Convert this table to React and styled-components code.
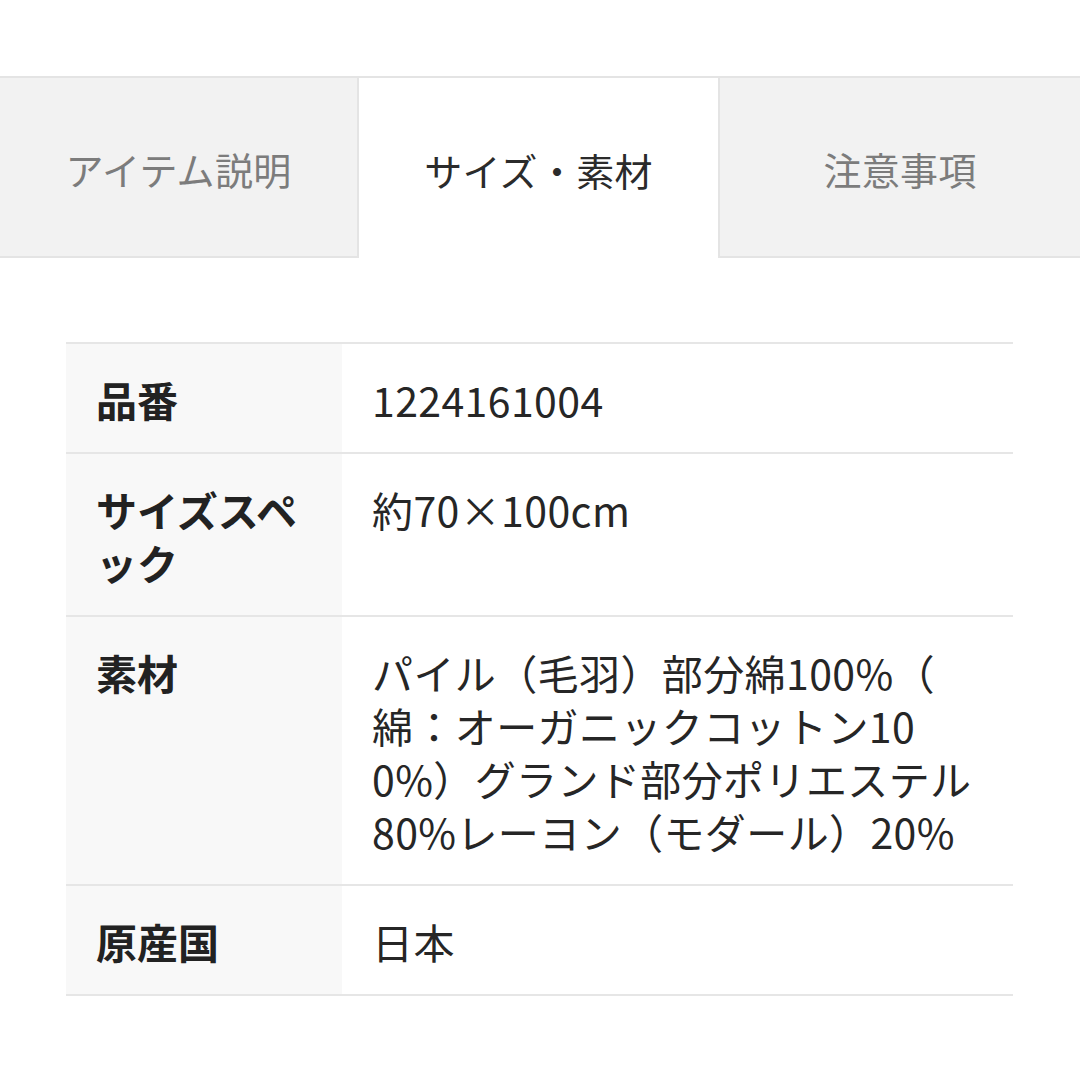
import React from "react";
import styled, { createGlobalStyle } from "styled-components";

const Global = createGlobalStyle`
  html, body { margin: 0; padding: 0; background: #fff; }
  body { font-family: "Noto Sans CJK JP", "Noto Sans", sans-serif; }
`;

const Page = styled.div`
  padding-top: 76px;
  width: 1080px;
`;

const TabBar = styled.div`
  display: grid;
  grid-template-columns: 359px 359px 1fr;
  border-top: 2px solid #e4e4e4;
`;

const Tab = styled.div`
  height: 180px;
  display: flex;
  align-items: center;
  justify-content: center;
  padding-top: 3px;
  box-sizing: border-box;
  font-size: 38px;
  letter-spacing: 0.3px;
  color: ${(p) => (p.$active ? "#2b2b2b" : "#7c7c7c")};
  background: ${(p) => (p.$active ? "#fff" : "#f2f2f2")};
  border-bottom: ${(p) => (p.$active ? "none" : "2px solid #e4e4e4")};
  border-right: ${(p) => (p.$side === "right" ? "2px solid #e4e4e4" : "none")};
  border-left: ${(p) => (p.$side === "left" ? "2px solid #e4e4e4" : "none")};
`;

const Table = styled.div`
  margin: 84px 67px 0 66px;
  border-top: 2px solid #e6e6e6;
`;

const Row = styled.div`
  display: grid;
  grid-template-columns: 276px 1fr;
  border-bottom: 2px solid #e6e6e6;
`;

const Label = styled.div`
  background: #f8f8f8;
  padding: 29px 20px 26px 30px;
  font-size: 41px;
  line-height: 53px;
  font-weight: 700;
  color: #222;
  word-break: break-all;
`;

const Value = styled.div`
  padding: 29px 20px 26px 30px;
  font-size: 41px;
  line-height: 53px;
  letter-spacing: 0.4px;
  color: #262626;
`;

const Line = styled.span`
  display: block;
  white-space: nowrap;
`;

const rows = [
  ["品番", ["1224161004"]],
  ["サイズスペック", ["約70×100cm"]],
  [
    "素材",
    [
      "パイル（毛羽）部分綿100%（",
      "綿：オーガニックコットン10",
      "0%）グランド部分ポリエステル",
      "80%レーヨン（モダール）20%",
    ],
  ],
  ["原産国", ["日本"]],
];

export default function App() {
  return (
    <Page>
      <Global />
      <TabBar>
        <Tab $side="right">アイテム説明</Tab>
        <Tab $active>サイズ・素材</Tab>
        <Tab $side="left">注意事項</Tab>
      </TabBar>
      <Table>
        {rows.map(([k, lines]) => (
          <Row key={k}>
            <Label>{k}</Label>
            <Value>
              {lines.map((l) => (
                <Line key={l}>{l}</Line>
              ))}
            </Value>
          </Row>
        ))}
      </Table>
    </Page>
  );
}
